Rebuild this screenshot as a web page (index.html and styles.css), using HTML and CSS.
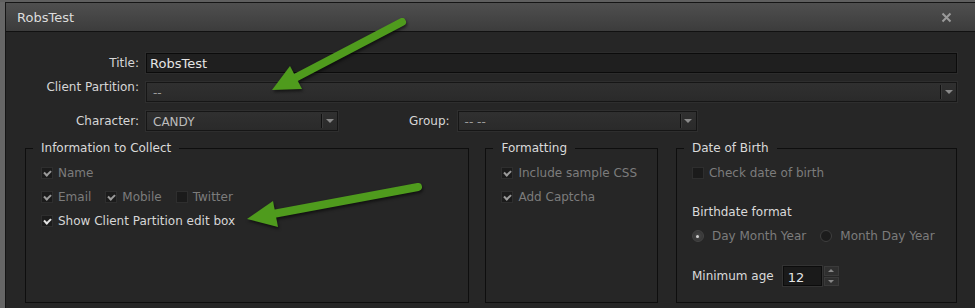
FILE: index.html
```html
<!DOCTYPE html>
<html lang="en">

<head>
  <meta charset="UTF-8" />
  <title>RobsTest</title>
  <link rel="stylesheet" href="styles.css">
</head>

<body>
  <div class="screen">
    <div class="window">
      <div class="titlebar">
        <span class="title">RobsTest</span>
        <svg class="close" width="11" height="11" viewBox="0 0 11 11">
          <path d="M1.5 1.5 L9.5 9.5 M9.5 1.5 L1.5 9.5" stroke="#9a9a9a" stroke-width="2" />
        </svg>
      </div>

      <div class="content">
        <div class="form">
          <div class="row">
            <label class="label">Title:</label>
            <div class="input wide">RobsTest</div>
          </div>
          <div class="row">
            <label class="label top">Client Partition:</label>
            <div class="select wide">
              <span class="value dim">--</span>
              <span class="drop"></span>
            </div>
          </div>
          <div class="row">
            <label class="label">Character:</label>
            <div class="select character">
              <span class="value">CANDY</span>
              <span class="drop"></span>
            </div>
            <label class="label group-label">Group:</label>
            <div class="select group">
              <span class="value dim">-- --</span>
              <span class="drop"></span>
            </div>
          </div>
        </div>

        <div class="groups">
          <fieldset class="box info">
            <legend>Information to Collect</legend>
            <div class="line">
              <span class="check on disabled"></span><span class="off-text">Name</span>
            </div>
            <div class="line">
              <span class="item"><span class="check on disabled"></span><span class="off-text">Email</span></span>
              <span class="item"><span class="check on disabled"></span><span class="off-text">Mobile</span></span>
              <span class="item"><span class="check"></span><span class="off-text">Twitter</span></span>
            </div>
            <div class="line">
              <span class="check on"></span><span>Show Client Partition edit box</span>
            </div>
          </fieldset>

          <fieldset class="box formatting">
            <legend>Formatting</legend>
            <div class="line">
              <span class="check on disabled"></span><span class="off-text">Include sample CSS</span>
            </div>
            <div class="line">
              <span class="check on disabled"></span><span class="off-text">Add Captcha</span>
            </div>
          </fieldset>

          <fieldset class="box dob">
            <legend>Date of Birth</legend>
            <div class="line">
              <span class="check"></span><span class="off-text">Check date of birth</span>
            </div>
            <div class="line heading">Birthdate format</div>
            <div class="line">
              <span class="item"><span class="radio selected"></span><span class="off-text">Day Month Year</span></span>
              <span class="item"><span class="radio"></span><span class="off-text">Month Day Year</span></span>
            </div>
            <div class="line age">
              <span>Minimum age</span>
              <div class="spin">
                <div class="spin-input">12</div>
                <div class="spin-buttons">
                  <span class="up"></span>
                  <span class="down"></span>
                </div>
              </div>
            </div>
          </fieldset>
        </div>
      </div>
    </div>

    <!-- annotation arrows drawn over the screenshot -->
    <svg class="arrows" width="975" height="308" viewBox="0 0 975 308">
      <g class="arrow">
        <line x1="402" y1="20" x2="293" y2="77" />
        <polygon points="272,88 290,64 302,87" />
      </g>
      <g class="arrow">
        <line x1="418" y1="185" x2="273" y2="212" />
        <polygon points="247,217 273,199 278,225" />
      </g>
    </svg>
  </div>
</body>

</html>
```

FILE: styles.css
```css
body {
  margin: 0;
  font-family: "DejaVu Sans", Verdana, sans-serif;
  font-size: 12px;
  color: #d6d6d6;
  background: #5f5f5f;
  overflow: hidden;
}

.screen {
  position: relative;
  width: 975px;
  height: 308px;
  background: #666;
}

.window {
  margin: 2px 0 0 5px;
  height: 306px;
  background: #262626;
  border-top: 1px solid #151515;
  border-left: 1px solid #151515;
  box-sizing: border-box;
}

.titlebar {
  height: 28px;
  display: flex;
  align-items: center;
  justify-content: space-between;
  padding: 0 23px 0 11px;
  background: linear-gradient(to bottom, #4f4f4f, #3c3c3c);
  border-bottom: 1px solid #111;
  font-size: 13px;
  color: #dcdcdc;
}

.content {
  padding: 21px 18px 0 0;
}

.form {
  display: flex;
  flex-direction: column;
  gap: 9px;
}

.row {
  display: flex;
  align-items: center;
  gap: 7px;
  height: 20px;
}

.label {
  width: 133px;
  flex: none;
  text-align: right;
  color: #d6d6d6;
}

.label.top {
  align-self: flex-start;
  margin-top: -2px;
}

.input {
  height: 20px;
  box-sizing: border-box;
  background: #1f1f1f;
  border: 1px solid #0b0b0b;
  box-shadow: 0 0 0 1px #2c2c2c;
  padding: 2px 3px 0;
  color: #e4e4e4;
  font-size: 13px;
}

.wide {
  flex: 1;
}

.select {
  position: relative;
  height: 20px;
  box-sizing: border-box;
  display: flex;
  align-items: center;
  background: linear-gradient(to bottom, #303030, #2a2a2a);
  border: 1px solid #161616;
  box-shadow: 0 0 0 1px #2e2e2e;
  padding-left: 6px;
  color: #bdbdbd;
}

.select .value {
  flex: 1;
  padding-top: 1px;
}

.select .dim {
  color: #9c9c9c;
}

.drop {
  width: 15px;
  height: 14px;
  border-left: 1px solid #111;
  box-shadow: inset 1px 0 0 #3a3a3a;
  display: flex;
  align-items: center;
  justify-content: center;
}

.drop::after {
  content: "";
  border-left: 4px solid transparent;
  border-right: 4px solid transparent;
  border-top: 4px solid #8a8a8a;
}

.character {
  width: 192px;
}

.label.group-label {
  width: auto;
  margin-left: 64px;
}

.group {
  width: 239px;
  margin-left: 1px;
}

.groups {
  display: flex;
  gap: 16px;
  margin: 10px 0 0 19px;
}

.box {
  margin: 0;
  height: 162px;
  box-sizing: border-box;
  border: 1px solid #0e0e0e;
  padding: 6px 10px 0 15px;
  min-width: 0;
}

.box legend {
  margin-left: -8px;
  padding: 0 8px;
  line-height: 14px;
  color: #dadada;
}

.info {
  width: 446px;
}

.formatting {
  width: 173px;
}

.dob {
  width: 282px;
  margin-left: 2px;
  padding-left: 15px;
}

.line {
  display: flex;
  align-items: center;
  height: 24px;
  gap: 5px;
  white-space: nowrap;
}

.item {
  display: flex;
  align-items: center;
  gap: 5px;
  margin-right: 9px;
}

.off-text {
  color: #7c7c7c;
}

.check {
  width: 12px;
  height: 12px;
  box-sizing: border-box;
  background: #1b1b1b;
  border: 1px solid #2e2e2e;
  display: inline-flex;
  align-items: center;
  justify-content: center;
}

.check.on::after {
  content: "";
  width: 5px;
  height: 3px;
  border-left: 2px solid #e2e2e2;
  border-bottom: 2px solid #e2e2e2;
  transform: translateY(-1px) rotate(-45deg);
}

.check.on.disabled::after {
  border-color: #9a9a9a;
}

.heading {
  margin-top: 15px;
  color: #dadada;
}

.radio {
  width: 12px;
  height: 12px;
  box-sizing: border-box;
  border-radius: 50%;
  background: #1c1c1c;
  border: 1px solid #3e3e3e;
  display: inline-flex;
  align-items: center;
  justify-content: center;
  margin-right: 3px;
}

.radio.selected {
  background: radial-gradient(circle, #4a4a4a, #2e2e2e);
  border-color: #444;
}

.radio.selected::after {
  content: "";
  width: 3px;
  height: 3px;
  border-radius: 50%;
  background: #d0d0d0;
}

.age {
  margin-top: 16px;
  gap: 9px;
  color: #dadada;
}

.spin {
  display: flex;
  height: 20px;
}

.spin-input {
  width: 39px;
  box-sizing: border-box;
  background: #1a1a1a;
  border: 1px solid #0c0c0c;
  box-shadow: 0 0 0 1px #333;
  padding: 3px 0 0 4px;
  color: #e4e4e4;
  font-size: 13px;
}

.spin-buttons {
  width: 15px;
  margin-left: 2px;
  display: flex;
  flex-direction: column;
  gap: 1px;
}

.spin-buttons span {
  flex: 1;
  background: #2f2f2f;
  border: 1px solid #3a3a3a;
  display: flex;
  align-items: center;
  justify-content: center;
}

.spin-buttons .up::after {
  content: "";
  border-left: 3px solid transparent;
  border-right: 3px solid transparent;
  border-bottom: 3px solid #888;
}

.spin-buttons .down::after {
  content: "";
  border-left: 3px solid transparent;
  border-right: 3px solid transparent;
  border-top: 3px solid #888;
}

.arrows {
  position: absolute;
  top: 0;
  left: 0;
  pointer-events: none;
  filter: drop-shadow(1px 2px 1.5px rgba(0, 0, 0, 0.55));
}

.arrow line {
  stroke: #4f9b1d;
  stroke-width: 8;
  stroke-linecap: round;
}

.arrow polygon {
  fill: #4f9b1d;
}
```
